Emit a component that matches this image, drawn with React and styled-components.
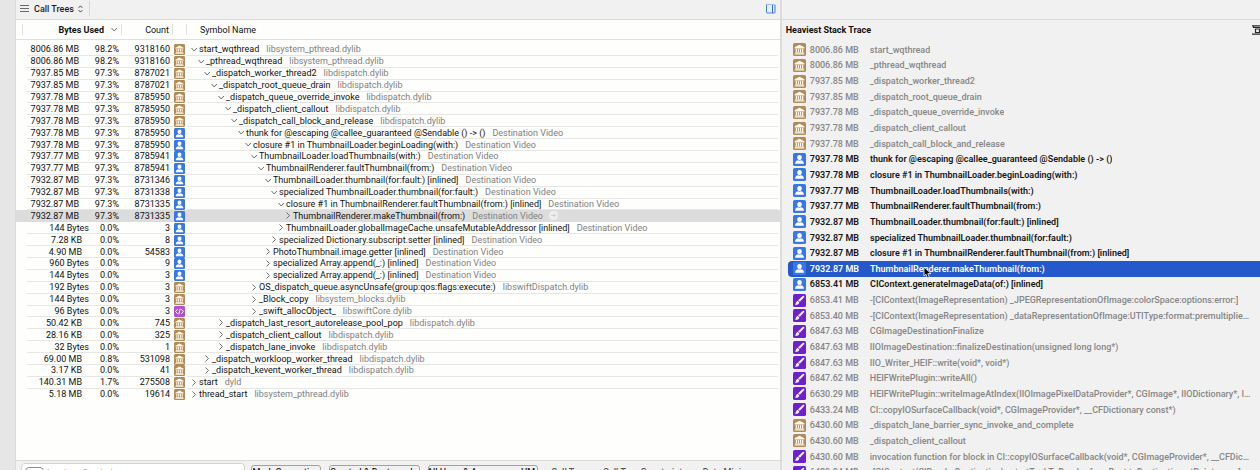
import React from "react";
import styled, { createGlobalStyle, css } from "styled-components";

const GlobalStyle = createGlobalStyle`
  *, *::before, *::after { box-sizing: border-box; }
  html, body { margin: 0; background: #f1f1f1; overflow: hidden; }
  body { font: 500 9px/10px Roboto, "Liberation Sans", sans-serif; color: #1e1e1e; }
  button, input, select { font: inherit; color: inherit; margin: 0; padding: 0; border: 0; background: none; }
`;

const Shell = styled.div`
  display: flex;
  height: 100vh;
  overflow: hidden;
`;
const Gutter = styled.div`
  flex: 0 0 16px;
  background: #e6e6e6;
  border-right: 1px solid #dadada;
`;
const Main = styled.main`
  flex: 765 1 0;
  min-width: 0;
  display: flex;
  flex-direction: column;
  height: calc(100vh + 16px);
  background: #fefefd;
`;
const Side = styled.aside`
  flex: 479 1 0;
  min-width: 0;
  border-left: 2px solid #dcdcdc;
  background: #f1f1f1;
`;
const Toolbar = styled.header`
  display: flex;
  align-items: center;
  justify-content: space-between;
  flex: none;
  height: 20px;
  padding: 0 4px 2px;
  background: #f1f1f1;
  border-bottom: 1px solid #d9d9d9;
`;
const TreeButton = styled.button`
  display: flex;
  align-items: center;
  gap: 4px;
  height: 15px;
  padding-right: 6px;
  border-right: 1px solid #d6d6d6;
`;
const IconButton = styled.button`
  display: flex;
  svg { display: block; }
`;

const Table = styled.table`
  flex: none;
  width: 100%;
  height: 381px;
  border-collapse: separate;
  border-spacing: 0;
  table-layout: fixed;
  white-space: nowrap;
  font-weight: 400;
  color: #111;
  td, th { padding: 0; text-align: right; }
`;
const HeadCell = styled.th`
  height: 20px;
  border-bottom: 1px solid #dedede;
  font-weight: ${(p) => (p.$strong ? 700 : 400)};
`;
const HeadLabel = styled.span`
  display: flex;
  align-items: center;
  justify-content: ${(p) => (p.$start ? "flex-start" : "flex-end")};
  gap: 7px;
  height: 11px;
  padding: ${(p) => (p.$start ? "0 0 0 13px" : "0 3px 0 0")};
  border-right: ${(p) => (p.$rule ? "1px solid #e0e0e0" : "0")};
`;
const EdgeLabel = styled.span`
  display: block;
  height: 11px;
  margin-left: 6px;
  border-left: 1px solid #e0e0e0;
`;
const Spacer = styled.tr`
  height: 4px;
`;
const Row = styled.tr`
  td { border-bottom: 1px solid #e6e6e5; }
  td:first-child, td:last-child { border-bottom: 0; }
  ${(p) =>
    p.$selected &&
    css`
      background: #dcdcdc;
      td { border-color: #dcdcdc; }
    `}
  &:last-child td { border-bottom-color: transparent; }
`;
const Num = styled.td`
  && { padding-right: ${(p) => p.$inset}px; }
`;
const Glyph = styled.td`
  && { border-bottom: 0; }
  line-height: 0;
  svg { display: block; margin-left: auto; margin-right: 2px; }
`;
const Name = styled.td`
  && { text-align: left; padding-left: ${(p) => 4 + p.$indent}px; }
`;
const NameLine = styled.span`
  display: flex;
  align-items: center;
  height: 10px;
`;
const Disclosure = styled.button`
  display: flex;
  width: 8px;
  svg { display: block; }
`;
const Library = styled.span`
  margin-left: 7px;
  color: #808080;
`;
const Focus = styled.button`
  display: flex;
  margin-left: 6px;
`;

const BottomBar = styled.footer`
  display: flex;
  align-items: flex-start;
  flex: none;
  height: 26px;
  margin-top: auto;
  padding: 2px 5px 0;
  background: #f1f1f1;
  border-top: 1px solid #d9d9d9;
  white-space: nowrap;
`;
const Search = styled.label`
  display: flex;
  align-items: flex-start;
  gap: 3px;
  flex: none;
  width: 224px;
  height: 20px;
  padding: 3px 3px 0;
  background: #fff;
  border: 1px solid #d4d4d4;
  border-radius: 4px;
  input { min-width: 0; flex: 1; height: 12px; }
  input::placeholder { color: #b5b5b5; opacity: 1; }
`;
const Scope = styled.span`
  display: flex;
  align-items: center;
  justify-content: center;
  width: 19px;
  height: 12px;
  border: 1px solid #8c8c8c;
  border-radius: 4px;
`;
const BarButton = styled.button`
  && {
    display: flex;
    align-items: center;
    justify-content: center;
    gap: 4px;
    flex: none;
    width: ${(p) => p.$width}px;
    height: 14px;
    margin: 2px 0 0 ${(p) => p.$gap}px;
    border: ${(p) => (p.$plain ? "0" : "1px solid #a2a2a2")};
    border-radius: 3px;
    color: ${(p) => (p.$plain ? "#555" : "#1e1e1e")};
    font-weight: 500;
  }
`;

const SideHead = styled.div`
  display: flex;
  align-items: center;
  justify-content: space-between;
  height: 22px;
  padding: 0 0 3px 4px;
  h2 { margin: 0; font-size: 9px; line-height: 10px; font-weight: 700; color: #111; }
`;
const Stack = styled.ul`
  display: grid;
  grid-auto-rows: 1fr;
  height: 438px;
  margin: 0;
  padding: 0 0 0 6px;
  list-style: none;
`;
const Frame = styled.li`
  position: relative;
  display: flex;
  align-items: center;
  gap: 4px;
  min-width: 0;
  padding: 0 8px 0 5px;
  border-radius: 4px 0 0 4px;
  white-space: nowrap;
  font-weight: ${(p) => (p.$own ? 600 : 500)};
  color: ${(p) => (p.$selected ? "#fff" : p.$own ? "#161616" : "#868686")};
  background: ${(p) => (p.$selected ? "#2559cb" : "transparent")};
  svg { flex: none; }
`;
const FrameName = styled.span`
  min-width: 0;
  margin-left: 7px;
  overflow: hidden;
  text-overflow: ellipsis;
`;
const Pointer = styled.svg`
  position: absolute;
  left: 135px;
  top: 5px;
  z-index: 1;
`;

const colours = { lib: "#b28a57", user: "#3878e6", code: "#b44fd2", brush: "#6f1fd0" };

function KindIcon({ kind, size }) {
  return (
    <svg width={size} height={size} viewBox="0 0 24 24" aria-hidden="true">
      <rect width="24" height="24" rx="3" fill={colours[kind]} />
      {kind === "lib" && (
        <g fill="#fff8ec">
          <path d="M12 3 21 8v2H3V8z" />
          <path d="M5 11h2.4v6H5zM9 11h2.2v6H9zM12.8 11H15v6h-2.2zM16.6 11H19v6h-2.4zM4 17.4h16V19H4zM3 19.4h18V21H3z" />
        </g>
      )}
      {kind === "user" && (
        <g fill="#fff">
          <path d="M12 3.5c2.8 0 4.2 2 4.2 4.6S14.600 13 12 13s-4.200-2.300-4.200-4.900S9.200 3.500 12 3.500z" />
          <path d="M4 20v-1.500c0-3 3-4.500 5.500-5l2.500 1 2.500-1c2.500.5 5.500 2 5.500 5V20z" />
        </g>
      )}
      {kind === "code" && (
        <path d="M8 7l-4.500 5L8 17M16 7l4.500 5L16 17M13.500 6l-3 12" fill="none" stroke="#fff" strokeWidth="2" />
      )}
      {kind === "brush" && (
        <g fill="#fff">
          <path d="M20.500 3.500c1 1 .3 2-.6 3l-7.400 8-3-3 8-7.400c1-.9 2-1.600 3-.6z" />
          <path d="M8.600 12.400l3 3c-.4 3.600-3.600 5-8 4.600 2-1.200 1.400-6.600 5-7.600z" />
        </g>
      )}
    </svg>
  );
}

const Chevron = ({ open }) => (
  <svg width="7" height="7" viewBox="0 0 7 7" fill="none" stroke="#6c6c6c" strokeWidth="1" aria-hidden="true">
    <path d={open ? "M0.500 2 3.200 5 5.900 2" : "M1.500 0.500 4.500 3.500 1.500 6.500"} />
  </svg>
);

const UpDown = () => (
  <svg width="5" height="8" viewBox="0 0 5 8" fill="none" stroke="#444" aria-hidden="true">
    <path d="M.7 2.800 2.500.9l1.800 1.900M.7 5.200l1.800 1.900 1.800-1.900" />
  </svg>
);

const DV = "Destination Video";
const LD = "libdispatch.dylib";
const rows = [
  ["8006.86 MB", "98.2%", "9318160", "lib", 0, "start_wqthread", "libsystem_pthread.dylib"],
  ["8006.86 MB", "98.2%", "9318160", "lib", 1, "_pthread_wqthread", "libsystem_pthread.dylib"],
  ["7937.85 MB", "97.3%", "8787021", "lib", 2, "_dispatch_worker_thread2", LD],
  ["7937.85 MB", "97.3%", "8787021", "lib", 3, "_dispatch_root_queue_drain", LD],
  ["7937.78 MB", "97.3%", "8785950", "lib", 4, "_dispatch_queue_override_invoke", LD],
  ["7937.78 MB", "97.3%", "8785950", "lib", 5, "_dispatch_client_callout", LD],
  ["7937.78 MB", "97.3%", "8785950", "lib", 6, "_dispatch_call_block_and_release", LD],
  ["7937.78 MB", "97.3%", "8785950", "user", 7, "thunk for @escaping @callee_guaranteed @Sendable () -> ()", DV],
  ["7937.78 MB", "97.3%", "8785950", "user", 8, "closure #1 in ThumbnailLoader.beginLoading(with:)", DV],
  ["7937.77 MB", "97.3%", "8785941", "user", 9, "ThumbnailLoader.loadThumbnails(with:)", DV],
  ["7937.77 MB", "97.3%", "8785941", "user", 10, "ThumbnailRenderer.faultThumbnail(from:)", DV],
  ["7932.87 MB", "97.3%", "8731346", "user", 11, "ThumbnailLoader.thumbnail(for:fault:) [inlined]", DV],
  ["7932.87 MB", "97.3%", "8731338", "user", 12, "specialized ThumbnailLoader.thumbnail(for:fault:)", DV],
  ["7932.87 MB", "97.3%", "8731335", "user", 13, "closure #1 in ThumbnailRenderer.faultThumbnail(from:) [inlined]", DV],
  ["7932.87 MB", "97.3%", "8731335", "user", 14, "ThumbnailRenderer.makeThumbnail(from:)", DV],
  ["144 Bytes", "0.0%", "3", "user", 13, "ThumbnailLoader.globalImageCache.unsafeMutableAddressor [inlined]", DV],
  ["7.28 KB", "0.0%", "8", "user", 12, "specialized Dictionary.subscript.setter [inlined]", DV],
  ["4.90 MB", "0.0%", "54583", "user", 11, "PhotoThumbnail.image.getter [inlined]", DV],
  ["960 Bytes", "0.0%", "9", "user", 11, "specialized Array.append(_:) [inlined]", DV],
  ["144 Bytes", "0.0%", "3", "user", 11, "specialized Array.append(_:) [inlined]", DV],
  ["192 Bytes", "0.0%", "3", "lib", 9, "OS_dispatch_queue.asyncUnsafe(group:qos:flags:execute:)", "libswiftDispatch.dylib"],
  ["144 Bytes", "0.0%", "3", "lib", 9, "_Block_copy", "libsystem_blocks.dylib"],
  ["96 Bytes", "0.0%", "3", "code", 9, "_swift_allocObject_", "libswiftCore.dylib"],
  ["50.42 KB", "0.0%", "745", "lib", 4, "_dispatch_last_resort_autorelease_pool_pop", LD],
  ["28.16 KB", "0.0%", "325", "lib", 4, "_dispatch_client_callout", LD],
  ["32 Bytes", "0.0%", "1", "lib", 4, "_dispatch_lane_invoke", LD],
  ["69.00 MB", "0.8%", "531098", "lib", 2, "_dispatch_workloop_worker_thread", LD],
  ["3.17 KB", "0.0%", "41", "lib", 2, "_dispatch_kevent_worker_thread", LD],
  ["140.31 MB", "1.7%", "275508", "lib", 0, "start", "dyld"],
  ["5.18 MB", "0.0%", "19614", "lib", 0, "thread_start", "libsystem_pthread.dylib"],
];
const LAST_OPEN = 13;
const SELECTED = 14;

const insetFor = (bytes) => (bytes.endsWith("Bytes") ? 2 : bytes.length > 9 ? 12 : 9);

const frames = [
  ["lib", "8006.86 MB", "start_wqthread"],
  ["lib", "8006.86 MB", "_pthread_wqthread"],
  ["lib", "7937.85 MB", "_dispatch_worker_thread2"],
  ["lib", "7937.85 MB", "_dispatch_root_queue_drain"],
  ["lib", "7937.78 MB", "_dispatch_queue_override_invoke"],
  ["lib", "7937.78 MB", "_dispatch_client_callout"],
  ["lib", "7937.78 MB", "_dispatch_call_block_and_release"],
  ["user", "7937.78 MB", "thunk for @escaping @callee_guaranteed @Sendable () -> ()"],
  ["user", "7937.78 MB", "closure #1 in ThumbnailLoader.beginLoading(with:)"],
  ["user", "7937.77 MB", "ThumbnailLoader.loadThumbnails(with:)"],
  ["user", "7937.77 MB", "ThumbnailRenderer.faultThumbnail(from:)"],
  ["user", "7932.87 MB", "ThumbnailLoader.thumbnail(for:fault:) [inlined]"],
  ["user", "7932.87 MB", "specialized ThumbnailLoader.thumbnail(for:fault:)"],
  ["user", "7932.87 MB", "closure #1 in ThumbnailRenderer.faultThumbnail(from:) [inlined]"],
  ["user", "7932.87 MB", "ThumbnailRenderer.makeThumbnail(from:)"],
  ["user", "6853.41 MB", "CIContext.generateImageData(of:) [inlined]"],
  ["brush", "6853.41 MB", "-[CIContext(ImageRepresentation) _JPEGRepresentationOfImage:colorSpace:options:error:]"],
  ["brush", "6853.40 MB", "-[CIContext(ImageRepresentation) _dataRepresentationOfImage:UTIType:format:premultiplied:colorSpace:options:error:]"],
  ["brush", "6847.63 MB", "CGImageDestinationFinalize"],
  ["brush", "6847.63 MB", "IIOImageDestination::finalizeDestination(unsigned long long*)"],
  ["brush", "6847.63 MB", "IIO_Writer_HEIF::write(void*, void*)"],
  ["brush", "6847.62 MB", "HEIFWritePlugin::writeAll()"],
  ["brush", "6630.29 MB", "HEIFWritePlugin::writeImageAtIndex(IIOImagePixelDataProvider*, CGImage*, IIODictionary*, IIODictionary*, unsigned int)"],
  ["brush", "6433.24 MB", "CI::copyIOSurfaceCallback(void*, CGImageProvider*, __CFDictionary const*)"],
  ["lib", "6430.60 MB", "_dispatch_lane_barrier_sync_invoke_and_complete"],
  ["lib", "6430.60 MB", "_dispatch_client_callout"],
  ["brush", "6430.60 MB", "invocation function for block in CI::copyIOSurfaceCallback(void*, CGImageProvider*, __CFDictionary const*)"],
  ["brush", "6429.04 MB", "-[CIContext(CIRenderDestination) _startTaskToRender:fromRect:toDestination:atPoint:error:]"],
];

export default function App() {
  return (
    <>
      <GlobalStyle />
      <Shell>
        <Gutter />
        <Main>
          <Toolbar>
            <TreeButton type="button">
              <svg width="10" height="8" viewBox="0 0 10 8" stroke="#6a6a6a" aria-hidden="true">
                <path d="M0 .5h9M0 3.500h9M0 6.500h9" />
              </svg>
              Call Trees
              <UpDown />
            </TreeButton>
            <IconButton type="button" aria-label="Toggle inspector">
              <svg width="10" height="10" viewBox="0 0 10 10" fill="none" aria-hidden="true">
                <rect x=".5" y=".5" width="8.500" height="8.500" rx=".5" fill="#e6effc" stroke="#4a7fd6" />
                <path d="M1 .5h8M1 9h8" stroke="#9cc0f5" />
                <path d="M6.500 1v8" stroke="#2f6bd0" />
              </svg>
            </IconButton>
          </Toolbar>
          <Table>
            <colgroup>
              <col style={{ width: 11 }} />
              <col style={{ width: 64 }} />
              <col style={{ width: 31 }} />
              <col style={{ width: 51 }} />
              <col style={{ width: 14 }} />
              <col />
              <col style={{ width: 2 }} />
            </colgroup>
            <thead>
              <tr>
                <HeadCell><EdgeLabel /></HeadCell>
                <HeadCell colSpan={2} scope="col" $strong>
                  <HeadLabel $rule>
                    Bytes Used
                    <Chevron open />
                  </HeadLabel>
                </HeadCell>
                <HeadCell scope="col"><HeadLabel $rule>Count</HeadLabel></HeadCell>
                <HeadCell><HeadLabel $rule /></HeadCell>
                <HeadCell colSpan={2} scope="col"><HeadLabel $start>Symbol Name</HeadLabel></HeadCell>
              </tr>
            </thead>
            <tbody>
              <Spacer><td colSpan={7} /></Spacer>
              {rows.map(([bytes, share, count, kind, level, name, library], i) => (
                <Row key={i} $selected={i === SELECTED}>
                  <td />
                  <Num $inset={insetFor(bytes)}>{bytes}</Num>
                  <Num $inset={3}>{share}</Num>
                  <Num $inset={3}>{count}</Num>
                  <Glyph><KindIcon kind={kind} size={11} /></Glyph>
                  <Name $indent={Math.round(level * 6.7)}>
                    <NameLine>
                      <Disclosure type="button" aria-label="Toggle row"><Chevron open={i <= LAST_OPEN} /></Disclosure>
                      {name}
                      <Library>{library}</Library>
                      {i === SELECTED && (
                        <Focus type="button" aria-label="Focus">
                          <svg width="9" height="9" viewBox="0 0 9 9" aria-hidden="true">
                            <circle cx="4.500" cy="4.500" r="4.500" fill="#f0f0f0" />
                            <path d="M2 4.500h4.500M4.700 2.700l1.800 1.800-1.800 1.800" fill="none" stroke="#cfcfcf" />
                          </svg>
                        </Focus>
                      )}
                    </NameLine>
                  </Name>
                  <td />
                </Row>
              ))}
            </tbody>
          </Table>
          <BottomBar>
            <Search>
              <Scope>
                <svg width="12" height="6" viewBox="0 0 12 6" fill="none" stroke="#888" aria-hidden="true">
                  <path d="M0 .5h6M1 2.500h4M2 4.500h2M8 1l1.500 2L11 1" />
                </svg>
              </Scope>
              <input type="text" placeholder="Involves Symbol" aria-label="Involves Symbol" />
            </Search>
            <BarButton type="button" $width={70} $gap={6}>Mark Generation</BarButton>
            <BarButton type="button" $width={91} $gap={8}>Created &amp; Destroyed <UpDown /></BarButton>
            <BarButton type="button" $width={110} $gap={8}>All Heap &amp; Anonymous VM <UpDown /></BarButton>
            <BarButton type="button" $plain $width={36} $gap={13}>Call Tree</BarButton>
            <BarButton type="button" $plain $width={82} $gap={17}>Call Tree Constraints</BarButton>
            <BarButton type="button" $plain $width={48} $gap={17}>Data Mining</BarButton>
          </BottomBar>
        </Main>
        <Side>
          <Toolbar />
          <SideHead>
            <h2>Heaviest Stack Trace</h2>
            <IconButton type="button" aria-label="Stack options">
              <svg width="8" height="10" viewBox="0 0 8 10" fill="none" stroke="#2a2a2a" aria-hidden="true">
                <path d="M0 .8h8M0 9.200h8M1.500 1v1.500H8M3.500 4h4v3.500h-4z" strokeWidth="1.200" />
              </svg>
            </IconButton>
          </SideHead>
          <Stack>
            {frames.map(([kind, size, name], i) => (
              <Frame key={i} $own={kind === "user"} $selected={i === SELECTED}>
                <KindIcon kind={kind} size={13} />
                <span>{size}</span>
                <FrameName>{name}</FrameName>
                {i === SELECTED && (
                  <Pointer width="9" height="13" viewBox="0 0 9 13" aria-hidden="true">
                    <path d="M1 1v9l2-1.800L4.500 12l1.800-.8L4.800 7.600H8z" fill="#000" stroke="#fff" strokeWidth=".8" />
                  </Pointer>
                )}
              </Frame>
            ))}
          </Stack>
        </Side>
      </Shell>
    </>
  );
}
